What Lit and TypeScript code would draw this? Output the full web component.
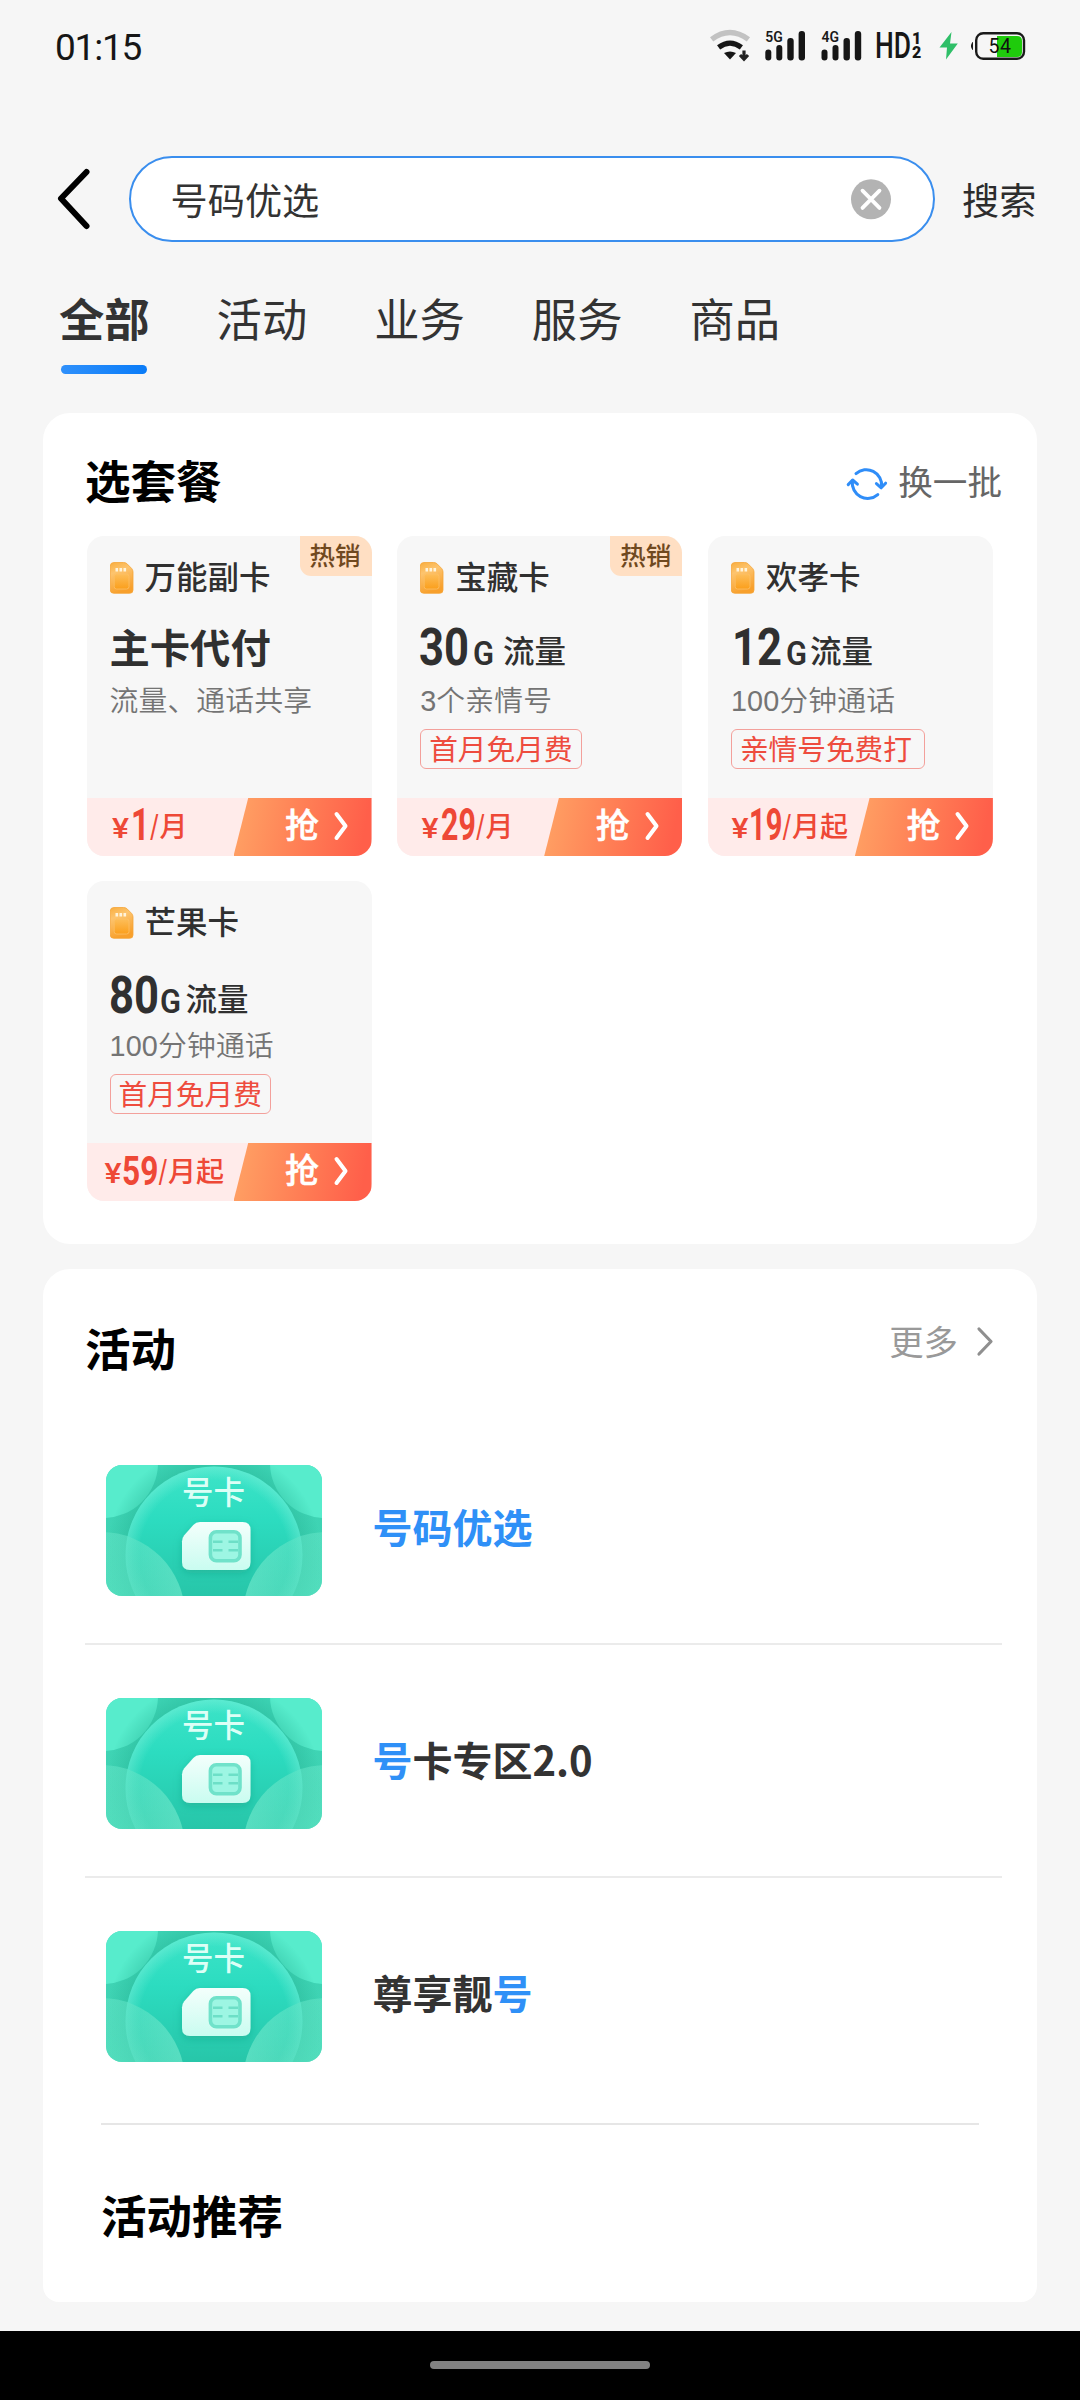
import { LitElement, html, svg, css, nothing } from "lit";
import { customElement, property } from "lit/decorators.js";

interface Piece {
  t: string;
  x: number;
  w: number;
  size: number;
  weight?: number;
  y?: number;
}

interface Plan {
  name: string;
  hot?: boolean;
  title?: string;
  data?: Piece[];
  desc: string;
  tag?: string;
  price: Piece[];
}

interface Part {
  t: string;
  hit?: boolean;
}

const num = (t: string, x: number, w: number): Piece => ({ t, x, w, size: 52, weight: 700, y: 40 });
const gig = (x: number): Piece => ({ t: "G", x, w: 21, size: 34, weight: 600, y: 40 });
const flow = (x: number): Piece => ({ t: "流量", x, w: 63, size: 31.5, weight: 500, y: 38.4 });
const yen = (x: number): Piece => ({ t: "¥", x, w: 17, size: 28, weight: 500, y: 40 });
const amount = (t: string, x: number, w: number, size = 45): Piece => ({ t, x, w, size, weight: 700, y: 41.5 });
const slash = (x: number): Piece => ({ t: "/", x, w: 8.5, size: 33, weight: 500, y: 40 });
const month = (t: string, x: number): Piece => ({ t, x, w: t.length * 28, size: 28, weight: 500, y: 39 });

const PLANS: Plan[] = [
  {
    name: "万能副卡",
    hot: true,
    title: "主卡代付",
    desc: "流量、通话共享",
    price: [yen(25), amount("1", 44, 18.5), slash(63.3), month("月", 72.5)],
  },
  {
    name: "宝藏卡",
    hot: true,
    data: [num("30", 22, 50), gig(76), flow(106)],
    desc: "3个亲情号",
    tag: "首月免月费",
    price: [yen(24.5), amount("29", 44, 34.8), slash(79.3), month("月", 88.5)],
  },
  {
    name: "欢孝卡",
    data: [num("12", 24, 50), gig(78), flow(102)],
    desc: "100分钟通话",
    tag: "亲情号免费打",
    price: [yen(23.5), amount("19", 41, 33.3), slash(74.8), month("月起", 84)],
  },
  {
    name: "芒果卡",
    data: [
      { ...num("80", 22, 50), y: 43 },
      { ...gig(73), y: 43 },
      { ...flow(98.5), y: 41.4 },
    ],
    desc: "100分钟通话",
    tag: "首月免月费",
    price: [yen(17.5), amount("59", 35, 36.3, 40), slash(71.8), month("月起", 81)],
  },
];

const ACTIVITIES: Part[][] = [
  [{ t: "号码优选", hit: true }],
  [{ t: "号", hit: true }, { t: "卡专区2.0" }],
  [{ t: "尊享靓" }, { t: "号", hit: true }],
];

const line = (pieces: Piece[]) => pieces.map(
  (p) => svg`<text x=${p.x} y=${p.y ?? 40} font-size=${p.size} font-weight=${p.weight ?? 400}
    textLength=${p.w} lengthAdjust="spacingAndGlyphs">${p.t}</text>`,
);

@customElement("status-bar")
export class StatusBar extends LitElement {
  static styles = css`
    :host { display: block; }
    .bar {
      height: 94px;
      padding: 0 46px 0 55px;
      display: flex;
      justify-content: space-between;
      align-items: center;
      box-sizing: border-box;
    }
    .time { font: 400 37px/44px Roboto, sans-serif; color: #161616; letter-spacing: -1.2px; margin-top: 1px; }
    .icons { display: block; margin-top: -4px; font-family: Roboto, sans-serif; }
  `;

  private bars(x: number, label: string) {
    return svg`
      <text x=${x} y="22" font-size="15.5" font-weight="600" fill="#1a1a1a" textLength="17.5" lengthAdjust="spacingAndGlyphs">${label}</text>
      <g fill="#161616">
        <rect x=${x} y="29.5" width="6" height="11" rx="3"/>
        <rect x=${x + 11} y="25" width="6" height="15.5" rx="3"/>
        <rect x=${x + 22} y="18" width="6.4" height="22.5" rx="3"/>
        <rect x=${x + 33.3} y="11" width="6.4" height="29.5" rx="3"/>
      </g>`;
  }

  render() {
    return html`
      <div class="bar">
        <span class="time">01:15</span>
        <svg class="icons" width="324" height="50" viewBox="0 0 324 50">
          <path d="M1.6 19.4 Q20 5.6 38.4 19.4" fill="none" stroke="#c2c2c2" stroke-width="5.4"/>
          <path d="M8.6 27.4 Q20 19 31.4 27.4" fill="none" stroke="#161616" stroke-width="5.2"/>
          <path d="M14 33 Q20 30 26 33 L20 39.6 Z" fill="#161616"/>
          <path d="M34 30.5 V38 M30 35 L34 39.2 L38 35" fill="none" stroke="#222" stroke-width="3.2"/>
          ${this.bars(55.3, "5G")}
          ${this.bars(111.5, "4G")}
          <text x="165" y="38" font-size="36" font-weight="500" fill="#161616" textLength="36" lengthAdjust="spacingAndGlyphs">HD</text>
          <text x="202" y="23.5" font-size="16" font-weight="900" fill="#161616">1</text>
          <text x="202" y="38" font-size="16" font-weight="900" fill="#161616">2</text>
          <path d="M241.5 12 L229.5 27.5 H237 L236 39.5 L247.8 23.5 H240 Z" fill="#2fbf68"/>
          <path d="M287 16 H307 Q312 16 312 21 V32 Q312 37 307 37 H287 Z" fill="#1fcb0c"/>
          <rect x="266.2" y="13.2" width="47.8" height="25.6" rx="7" fill="none" stroke="#1a1a1a" stroke-width="2.4"/>
          <path d="M262.5 22.5 Q260.3 26 262.5 29.5 Z" fill="#1a1a1a" stroke="#1a1a1a" stroke-width="1"/>
          <text x="278.5" y="32.8" font-size="19.5" fill="#111" textLength="22.5">54</text>
        </svg>
      </div>`;
  }
}

@customElement("plan-card")
export class PlanCard extends LitElement {
  @property({ attribute: false }) plan!: Plan;

  static styles = css`
    :host { display: block; font-family: "Noto Sans CJK SC", sans-serif; }
    .tile {
      height: 320px;
      border-radius: 17px;
      background: #f7f7f7;
      overflow: hidden;
      display: flex;
      flex-direction: column;
      position: relative;
    }
    .hot {
      position: absolute;
      top: 0;
      right: 0;
      width: 72px;
      height: 40px;
      border-radius: 0 0 0 11px;
      background: #ffdfc3;
      color: #70491f;
      font-size: 25.5px;
      font-weight: 500;
      line-height: 36px;
      padding-left: 10px;
      box-sizing: border-box;
    }
    .head { display: flex; align-items: center; gap: 11px; height: 32px; margin: 26px 0 0 23px; }
    .name { font-size: 31.5px; font-weight: 500; line-height: 32px; margin-top: -7px; color: #303030; white-space: nowrap; }
    .title { height: 50px; margin-top: 31px; }
    .words { display: block; padding-left: 23px; font-size: 40.3px; font-weight: 700; line-height: 41px; color: #303030; }
    .row { display: block; overflow: visible; fill: #303030; font-family: Roboto, "Noto Sans CJK SC", sans-serif; }
    .desc { margin: 8px 0 0 23px; font-size: 28.8px; line-height: 36px; color: #747474; font-weight: 350; font-family: "Liberation Sans", "Noto Sans CJK SC", sans-serif; letter-spacing: 0.15px; white-space: nowrap; }
    .tag {
      align-self: flex-start;
      margin: 10px 0 0 23px;
      padding: 0 8px;
      height: 40px;
      box-sizing: border-box;
      border: 1.5px solid #f3a09b;
      border-radius: 6px;
      font-size: 28.7px;
      line-height: 36px;
      color: #ee4c3e;
      white-space: nowrap;
    }
    .tag.wide { padding-right: 12px; }
    .foot { margin-top: auto; height: 58px; background: #ffebea; display: flex; justify-content: space-between; }
    .price { display: block; overflow: visible; fill: #ee4836; font-family: Roboto, "Noto Sans CJK SC", sans-serif; }
    .grab {
      width: 138px;
      height: 58px;
      margin-left: -20px;
      clip-path: polygon(14.7px 0, 100% 0, 100% 100%, 0 100%);
      background: linear-gradient(100deg, #ff9d62 8%, #ff7e55 50%, #ff5f4a 92%);
      color: #fff;
      display: flex;
      padding-left: 51.5px;
      box-sizing: border-box;
      font-size: 34px;
      font-weight: 500;
      line-height: 51px;
      -webkit-text-stroke: 0.5px #fff;
    }
    .go { display: block; margin: 13px 0 0 14px; }
  `;

  render() {
    const p = this.plan;
    return html`
      <div class="tile">
        ${p.hot ? html`<span class="hot">热销</span>` : nothing}
        <div class="head">
          <svg width="24" height="32" viewBox="0 0 24 32">
            <defs>
              <linearGradient id="o" x1="0" y1="0" x2="0.3" y2="1">
                <stop offset="0" stop-color="#f9ae3e"/><stop offset="0.35" stop-color="#fdc46e"/><stop offset="1" stop-color="#f8a02c"/>
              </linearGradient>
              <linearGradient id="i" x1="0" y1="0" x2="0" y2="1">
                <stop offset="0" stop-color="#fdbe5a"/><stop offset="1" stop-color="#fb9f1c"/>
              </linearGradient>
            </defs>
            <path d="M4 0.5 H13.5 Q15.5 0.5 16.8 1.6 L21.6 6.4 Q23 8 23 10 V28 Q23 31.3 19.7 31.3 H3.8 Q0.3 31.3 0.3 28 V4 Q0.3 0.5 4 0.5 Z" fill="url(#o)" stroke="#f5a437" stroke-width="0.8"/>
            <rect x="4.2" y="12" width="14.8" height="15" rx="2.4" fill="url(#i)" stroke="#fdc067" stroke-width="0.8"/>
            <path d="M6.8 6 V9.4 M10.8 6 V9.4 M14.8 6 V9.4" stroke="#fff3da" stroke-width="2.6"/>
          </svg>
          <span class="name">${p.name}</span>
        </div>
        <div class="title">
          ${p.title
            ? html`<span class="words">${p.title}</span>`
            : html`<svg class="row" width="285" height="50">${line(p.data ?? [])}</svg>`}
        </div>
        <div class="desc">${p.desc}</div>
        ${p.tag ? html`<div class="tag ${p.tag.length > 5 ? "wide" : ""}">${p.tag}</div>` : nothing}
        <div class="foot">
          <svg class="price" width="160" height="58">${line(p.price)}</svg>
          <div class="grab">
            <span>抢</span>
            <svg class="go" width="18" height="30" viewBox="0 0 18 30">
              <path d="M3.5 3 L12.5 15 L3.5 27" fill="none" stroke="#fff" stroke-width="4" stroke-linecap="round" stroke-linejoin="round"/>
            </svg>
          </div>
        </div>
      </div>`;
  }
}

@customElement("sim-thumb")
export class SimThumb extends LitElement {
  static styles = css`
    :host { display: block; width: 216px; height: 131px; margin-top: 5px; }
    .pic { display: block; border-radius: 16px; font-family: "Noto Sans CJK SC", sans-serif; }
  `;

  render() {
    return html`
      <svg class="pic" width="216" height="131" viewBox="0 0 216 131">
        <defs>
          <linearGradient id="bg" x1="0" y1="0" x2="0" y2="1">
            <stop offset="0" stop-color="#3ed4b5"/><stop offset="1" stop-color="#3fd3b2"/>
          </linearGradient>
          <linearGradient id="disc" x1="0" y1="0" x2="0" y2="1">
            <stop offset="0" stop-color="#3de4c8"/><stop offset="0.3" stop-color="#2cdcc0"/><stop offset="0.75" stop-color="#27c5a8"/>
          </linearGradient>
          <radialGradient id="rim" cx="0.5" cy="0.5" r="0.5">
            <stop offset="0.84" stop-color="#8af5de" stop-opacity="0"/><stop offset="1" stop-color="#8af5de" stop-opacity="0.4"/>
          </radialGradient>
          <radialGradient id="halo" cx="0.5" cy="0.5" r="0.5">
            <stop offset="0.8" stop-color="#1fae90" stop-opacity="0.38"/><stop offset="1" stop-color="#1fae90" stop-opacity="0"/>
          </radialGradient>
          <linearGradient id="low" x1="0" y1="0" x2="0" y2="1">
            <stop offset="0" stop-color="#5ce3c4" stop-opacity="0.52"/><stop offset="1" stop-color="#52e0ba" stop-opacity="0.52"/>
          </linearGradient>
          <linearGradient id="edge" x1="0" y1="0" x2="1" y2="0">
            <stop offset="0" stop-color="#7cebd2" stop-opacity="0.4"/><stop offset="0.3" stop-color="#7cebd2" stop-opacity="0.1"/>
            <stop offset="0.7" stop-color="#7cebd2" stop-opacity="0.1"/><stop offset="1" stop-color="#7cebd2" stop-opacity="0.4"/>
          </linearGradient>
          <linearGradient id="sim" x1="0" y1="0" x2="0" y2="1">
            <stop offset="0" stop-color="#f4fffc"/><stop offset="1" stop-color="#c9fcf0"/>
          </linearGradient>
          <filter id="sh" x="-30%" y="-30%" width="160%" height="170%">
            <feDropShadow dx="0" dy="3" stdDeviation="4" flood-color="#14967a" flood-opacity="0.4"/>
          </filter>
        </defs>
        <rect width="216" height="131" fill="url(#bg)"/>
        <circle cx="-3" cy="-2" r="55" fill="#5cf0d0" opacity="0.85"/>
        <circle cx="219" cy="-2" r="55" fill="#5cf0d0" opacity="0.85"/>
        <circle cx="108" cy="90" r="108" fill="url(#halo)"/>
        <circle cx="108" cy="90" r="88.5" fill="url(#disc)"/>
        <circle cx="108" cy="90" r="88.5" fill="url(#rim)"/>
        <circle cx="-5" cy="151" r="84" fill="url(#low)"/>
        <circle cx="221" cy="151" r="84" fill="url(#low)"/>
        <circle cx="-5" cy="151" r="84" fill="url(#edge)"/>
        <circle cx="221" cy="151" r="84" fill="url(#edge)"/>
        <text x="76" y="38.6" font-size="31.5" font-weight="500" fill="#dcfff6">号卡</text>
        <path d="M94 57 H136.5 Q144.5 57 144.5 65 V97 Q144.5 105 136.5 105 H84 Q76 105 76 97 V76.5 Q76 73 78.3 70.3 L87.3 60 Q90 57 94 57 Z" fill="url(#sim)" filter="url(#sh)"/>
        <rect x="104.4" y="66.7" width="29.6" height="29" rx="6" fill="#9df6e3" stroke="#70e2ca" stroke-width="3.6"/>
        <path d="M107 76.7 H116.5 M122.5 76.7 H132 M107 85.3 H116.5 M122.5 85.3 H132" stroke="#6ddfc7" stroke-width="2.6"/>
      </svg>`;
  }
}

@customElement("app-root")
export class AppRoot extends LitElement {
  static styles = css`
    :host { display: block; font-family: "Noto Sans CJK SC", sans-serif; }
    .page { width: 1080px; height: 2400px; background: #f6f6f6; display: flex; flex-direction: column; overflow: hidden; }
    .search { display: flex; align-items: center; height: 86px; margin-top: 62px; padding-left: 54px; }
    .back { display: block; width: 40px; height: 66px; flex: none; margin-right: 35px; }
    .box {
      width: 806px;
      height: 86px;
      flex: none;
      box-sizing: border-box;
      border: 2px solid #3a8eee;
      border-radius: 43px;
      background: #fff;
      display: flex;
      justify-content: space-between;
      align-items: center;
      padding: 0 42px 0 39.5px;
    }
    .query { font-size: 37.2px; line-height: 50px; color: #333; font-weight: 400; }
    .btn { font-size: 37.2px; line-height: 50px; color: #2c2c2c; margin-left: 27px; font-weight: 400; }
    .clear { display: block; }
    .tabs { display: flex; gap: 67px; margin-top: 45px; padding-left: 59px; height: 87px; }
    .tab { font-size: 45.3px; line-height: 61px; color: #333; font-weight: 400; white-space: nowrap; }
    .tab.on { font-weight: 700; }
    .tab.on::after { content: ""; display: block; width: 86px; height: 9px; border-radius: 5px; margin: 17px 0 0 2px; background: linear-gradient(90deg, #2f90fb, #0a7cf8); }
    .card { margin: 0 43px; background: #fff; border-radius: 27px; box-sizing: border-box; }
    .plans { margin-top: 39px; height: 831px; padding: 37px 44px 0 43.5px; }
    .bar { display: flex; justify-content: space-between; align-items: center; height: 60px; margin-right: -9px; }
    .plans .bar { margin-left: -1.5px; }
    h2 { margin: -2px 0 0; font-size: 45.5px; line-height: 60px; font-weight: 700; color: #000; }
    .swap { display: flex; align-items: center; gap: 10px; font-size: 34.6px; line-height: 50px; font-weight: 400; color: #666; }
    .swap svg { margin-top: 8px; }
    .grid { display: grid; grid-template-columns: repeat(3, 285px); column-gap: 25.7px; row-gap: 25px; margin-top: 26px; }
    .acts { margin-top: 25px; height: 1033px; padding: 49px 35px 0 42px; border-radius: 27px 27px 16px 16px; }
    .acts .bar { margin-right: 7px; }
    .more { display: flex; align-items: center; gap: 17px; font-size: 34.4px; line-height: 50px; font-weight: 400; color: #999; margin-top: -16px; }
    .more svg { margin-top: 1px; }
    .item { display: flex; align-items: center; height: 233px; box-sizing: border-box; padding-left: 21px; gap: 50.5px; border-bottom: 2px solid #ebebeb; }
    .list { margin-top: 34px; }
    .item:last-child { border-color: transparent; }
    .label { font-size: 40px; line-height: 60px; font-weight: 700; color: #333; margin-top: -3px; }
    .hit { color: #2f90f7; }
    .rec { border-top: 2px solid #e6e6e6; margin: 12px 23px 0 16px; padding-top: 61px; }
    .nav { margin-top: auto; height: 69px; flex: none; background: #000; display: flex; justify-content: center; padding-top: 30px; box-sizing: border-box; }
    .pill { width: 220px; height: 8px; border-radius: 4px; background: #828282; }
  `;

  render() {
    return html`
      <div class="page">
        <status-bar></status-bar>
        <div class="search">
          <svg class="back" viewBox="0 0 40 66">
            <path d="M32.5 6 L7 32.5 L32.5 60" fill="none" stroke="#000" stroke-width="6" stroke-linecap="round" stroke-linejoin="round"/>
          </svg>
          <div class="box">
            <span class="query">号码优选</span>
            <svg class="clear" width="40" height="41" viewBox="0 0 40 41">
              <circle cx="20" cy="20.3" r="20" fill="#b3b3b3"/>
              <path d="M11.5 11.7 L28.5 28.9 M28.5 11.7 L11.5 28.9" stroke="#fff" stroke-width="3.8" stroke-linecap="round"/>
            </svg>
          </div>
          <span class="btn">搜索</span>
        </div>
        <nav class="tabs">
          ${["全部", "活动", "业务", "服务", "商品"].map((t, i) => html`<span class="tab ${i === 0 ? "on" : ""}">${t}</span>`)}
        </nav>
        <section class="card plans">
          <div class="bar">
            <h2>选套餐</h2>
            <div class="swap">
              <svg width="42" height="36" viewBox="0 0 42 36">
                <g fill="none" stroke="#2f8df8" stroke-width="3" stroke-linecap="round" stroke-linejoin="round">
                  <path d="M10 7.6 A15.4 15.4 0 0 1 35.6 20.6"/>
                  <path d="M30.4 17.6 L35.2 21.8 L39.6 17.2"/>
                  <path d="M31.8 28.6 A15.4 15.4 0 0 1 6.4 15"/>
                  <path d="M2.2 18.6 L6.6 14 L11.4 18.2"/>
                </g>
              </svg>
              <span>换一批</span>
            </div>
          </div>
          <div class="grid">
            ${PLANS.map((p) => html`<plan-card .plan=${p}></plan-card>`)}
          </div>
        </section>
        <section class="card acts">
          <div class="bar">
            <h2>活动</h2>
            <div class="more">
              <span>更多</span>
              <svg width="20" height="32" viewBox="0 0 20 32">
                <path d="M4 4 L16 16.5 L4 29" fill="none" stroke="#8f8f8f" stroke-width="3.2" stroke-linecap="round" stroke-linejoin="round"/>
              </svg>
            </div>
          </div>
          <div class="list">
            ${ACTIVITIES.map((parts) => html`
              <div class="item">
                <sim-thumb></sim-thumb>
                <span class="label">${parts.map((p) => html`<span class=${p.hit ? "hit" : ""}>${p.t}</span>`)}</span>
              </div>`)}
          </div>
          <div class="rec"><h2>活动推荐</h2></div>
        </section>
        <div class="nav"><div class="pill"></div></div>
      </div>`;
  }
}
